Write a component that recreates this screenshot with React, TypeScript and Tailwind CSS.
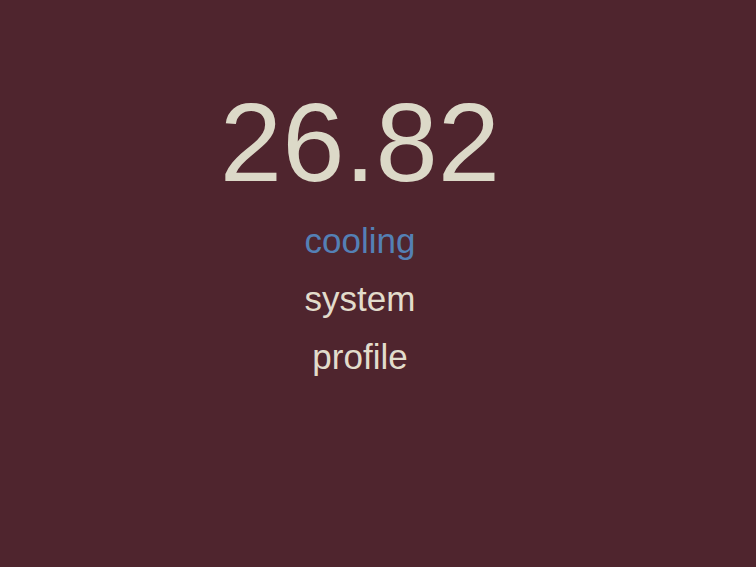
export default function App() {
  const words = [
    { label: "cooling", active: true },
    { label: "system", active: false },
    { label: "profile", active: false },
  ];

  return (
    <div className="min-h-screen w-full bg-[#4f252e] font-['Liberation_Sans',Arial,sans-serif]">
      <div className="w-[720px] pt-[87px] flex flex-col items-center text-center">
        <div className="text-[112px] leading-[112px] text-[#dcd9c8]">26.82</div>
        <ul className="mt-[13px] flex flex-col items-center">
          {words.map((w) => (
            <li
              key={w.label}
              className={`text-[35px] leading-[58px] ${w.active ? "text-[#5480b5]" : "text-[#e2dccb]"}`}
            >
              {w.label}
            </li>
          ))}
        </ul>
      </div>
    </div>
  );
}
